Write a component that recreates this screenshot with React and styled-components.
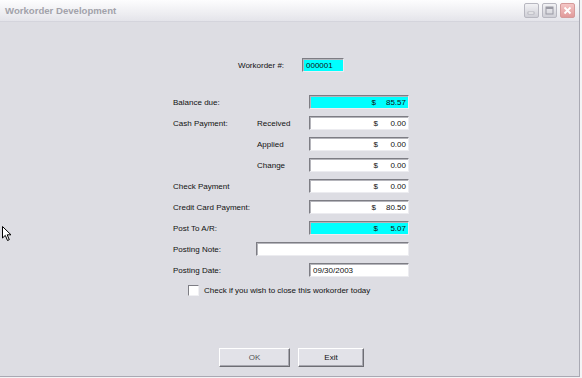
import React from 'react';
import styled, { createGlobalStyle, css } from 'styled-components';

const Global = createGlobalStyle`
  html, body { margin: 0; padding: 0; background: #f4f4f6; }
  body { font-family: "Liberation Sans", Arial, sans-serif; }
`;

const Window = styled.div`
  width: 579px;
  height: 376px;
  background: #dddde3;
  border-right: 1px solid #a9a9b3;
  border-bottom: 1px solid #a9a9b3;
  display: flex;
  flex-direction: column;
  position: relative;
  overflow: hidden;
`;

const TitleBar = styled.div`
  height: 21px;
  display: flex;
  align-items: center;
  padding: 0 4px 0 5px;
  background: linear-gradient(#fdfdfe, #ececf0 70%, #e4e4ea);
  border-bottom: 1px solid #d4d4dc;
`;

const Title = styled.div`
  flex: 1;
  font-size: 9.6px;
  font-weight: bold;
  color: #a2a2aa;
`;

const CaptionButtons = styled.div`
  display: flex;
  gap: 3px;
`;

const CapBtn = styled.div`
  width: 13px;
  height: 13px;
  border: 1px solid #b7b7c0;
  border-radius: 2px;
  background: linear-gradient(#f2f2f5, #cfcfd6);
  display: flex;
  align-items: center;
  justify-content: center;
  ${p => p.$close && css`
    background: linear-gradient(#f4c6c6, #e19a9a);
    border-color: #d59a9a;
  `}
`;

const Body = styled.div`
  flex: 1;
  display: flex;
  flex-direction: column;
  font-size: 8px;
  color: #111;
`;

const OrderRow = styled.div`
  margin-top: 36px;
  display: flex;
  align-items: center;
  padding-left: 238px;
  height: 14px;
`;

const OrderLabel = styled.span`
  width: 64px;
`;

const Form = styled.div`
  margin-top: 23px;
  margin-left: 173px;
  display: grid;
  grid-template-columns: 84px 52px 100px;
  grid-auto-rows: 14px;
  row-gap: 7px;
  align-items: center;
`;

const Label = styled.span`
  grid-column: ${p => p.$col || 1};
  white-space: nowrap;
`;

const Field = styled.div`
  grid-column: ${p => p.$span || 3};
  height: 14px;
  box-sizing: border-box;
  border-top: 1px solid #7d7d84;
  border-left: 1px solid #7d7d84;
  border-right: 1px solid #ececf0;
  border-bottom: 1px solid #ececf0;
  box-shadow: inset 1px 1px 0 #b5b5bb;
  background: ${p => (p.$cyan ? '#00ffff' : '#ffffff')};
  display: flex;
  align-items: center;
  justify-content: ${p => (p.$left ? 'flex-start' : 'flex-end')};
  padding: 0 2px 0 3px;
  font-size: 8px;
  width: ${p => p.$w || 'auto'};
  margin-left: ${p => p.$ml || '0'};
`;

const Dollar = styled.span`
  margin-right: 10px;
`;

const Amount = styled.span`
  min-width: 18px;
  text-align: right;
`;

const CheckRow = styled.div`
  margin-top: 8px;
  margin-left: 188px;
  display: flex;
  align-items: center;
  gap: 5px;
`;

const CheckBox = styled.div`
  width: 9px;
  height: 9px;
  background: #fff;
  border-top: 1px solid #7d7d84;
  border-left: 1px solid #7d7d84;
  border-right: 1px solid #f0f0f3;
  border-bottom: 1px solid #f0f0f3;
`;

const Buttons = styled.div`
  margin-top: auto;
  margin-bottom: 9px;
  margin-left: 219px;
  display: flex;
  gap: 8px;
`;

const Button = styled.div`
  width: ${p => p.$w}px;
  height: 19px;
  box-sizing: border-box;
  border-top: 1px solid #ffffff;
  border-left: 1px solid #ffffff;
  border-right: 1px solid #6e6e74;
  border-bottom: 1px solid #6e6e74;
  box-shadow: inset -1px -1px 0 #a8a8b0;
  background: #e2e2e8;
  display: flex;
  align-items: center;
  justify-content: center;
  font-size: 8px;
  color: ${p => (p.$dim ? '#555' : '#111')};
`;

const Cursor = styled.svg`
  position: absolute;
  left: 2px;
  top: 226px;
`;

const Money = ({ value, cyan }) => (
  <Field $cyan={cyan}>
    <Dollar>$</Dollar>
    <Amount>{value}</Amount>
  </Field>
);

export default function App() {
  return (
    <>
      <Global />
      <Window>
        <TitleBar>
          <Title>Workorder Development</Title>
          <CaptionButtons>
            <CapBtn>
              <svg width="9" height="9" viewBox="0 0 9 9"><rect x="1" y="6" width="6" height="2" fill="#fff" stroke="#9a9aa4" strokeWidth="0.6" /></svg>
            </CapBtn>
            <CapBtn>
              <svg width="9" height="9" viewBox="0 0 9 9"><rect x="1" y="1" width="7" height="7" fill="none" stroke="#9a9aa4" strokeWidth="1" /><rect x="1" y="1" width="7" height="2" fill="#9a9aa4" /></svg>
            </CapBtn>
            <CapBtn $close>
              <svg width="9" height="9" viewBox="0 0 9 9"><path d="M1.5 1.5 L7.5 7.5 M7.5 1.5 L1.5 7.5" stroke="#fff" strokeWidth="1.8" /></svg>
            </CapBtn>
          </CaptionButtons>
        </TitleBar>
        <Body>
          <OrderRow>
            <OrderLabel>Workorder #:</OrderLabel>
            <Field $cyan $left $w="42px">000001</Field>
          </OrderRow>
          <Form>
            <Label>Balance due:</Label>
            <Money value="85.57" cyan />

            <Label>Cash Payment:</Label>
            <Label $col={2}>Received</Label>
            <Money value="0.00" />

            <Label $col={2}>Applied</Label>
            <Money value="0.00" />

            <Label $col={2}>Change</Label>
            <Money value="0.00" />

            <Label>Check Payment</Label>
            <Money value="0.00" />

            <Label>Credit Card Payment:</Label>
            <Money value="80.50" />

            <Label>Post To A/R:</Label>
            <Money value="5.07" cyan />

            <Label>Posting Note:</Label>
            <Field $span="2 / 4" $ml="-1px" $left />

            <Label>Posting Date:</Label>
            <Field $left>09/30/2003</Field>
          </Form>
          <CheckRow>
            <CheckBox />
            <span>Check if you wish to close this workorder today</span>
          </CheckRow>
          <Buttons>
            <Button $w={71} $dim>OK</Button>
            <Button $w={66}>Exit</Button>
          </Buttons>
        </Body>
        <Cursor width="12" height="16" viewBox="0 0 12 16">
          <path d="M0.5 0.5 L0.5 12 L3.3 9.4 L5.5 14.5 L7.3 13.7 L5.2 8.8 L9 8.8 Z" fill="#fff" stroke="#000" strokeWidth="1" strokeLinejoin="miter" />
        </Cursor>
      </Window>
    </>
  );
}
